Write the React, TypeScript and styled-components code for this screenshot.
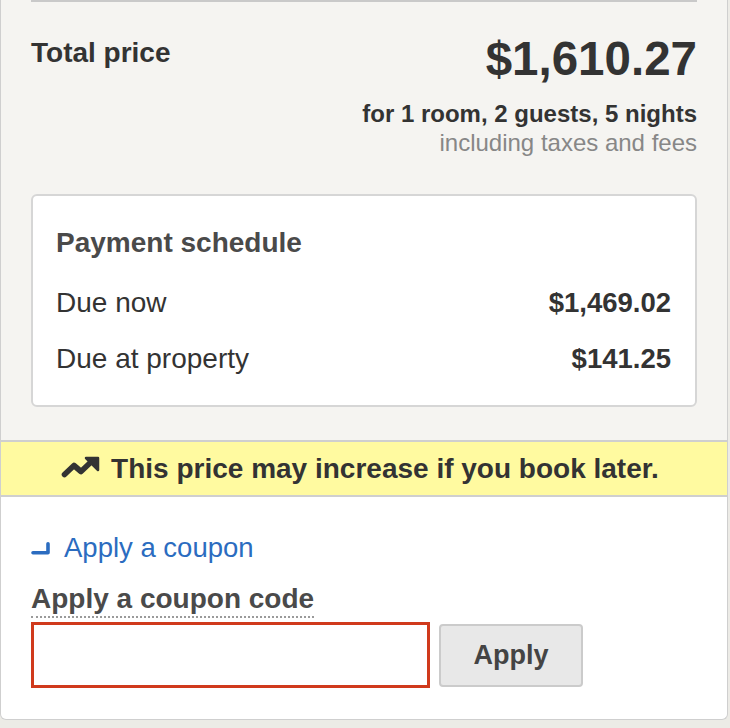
import React from 'react';
import styled, {createGlobalStyle} from 'styled-components';

const GlobalStyle = createGlobalStyle`
  html, body {
    margin: 0;
    background: #ecebe6;
  }
  body {
    font-family: 'Liberation Sans', Arial, Helvetica, sans-serif;
    color: #333;
  }
`

const Card = styled.div`
  width: 728px;
  box-sizing: border-box;
  border: 1px solid #cfcfcf;
  border-top: none;
  border-radius: 0 0 6px 6px;
  background: #fff;
  overflow: hidden;
`

const PriceSection = styled.section`
  background: #f5f4f1;
  padding: 0 30px 33px;
`

const Divider = styled.hr`
  margin: 0;
  border: none;
  height: 2px;
  background: #c9c9c9;
`

const TotalRow = styled.div`
  display: flex;
  justify-content: space-between;
  align-items: flex-start;
  margin-top: 30px;
`

const TotalLabel = styled.h2`
  margin: 4px 0 0;
  font-size: 28px;
  line-height: 34px;
  font-weight: 700;
  color: #333;
`

const PriceBlock = styled.div`
  text-align: right;
`

const BigPrice = styled.div`
  font-size: 47.5px;
  line-height: 54px;
  font-weight: 700;
  color: #333;
  margin-bottom: 13px;
`

const StayLine = styled.div<{$muted?: boolean}>`
  font-size: 24px;
  line-height: 29px;
  font-weight: ${p => p.$muted ? 400 : 700};
  color: ${p => p.$muted ? '#878787' : '#333'};
`

const ScheduleBox = styled.div`
  margin-top: 37px;
  background: #fff;
  border: 2px solid #d6d6d6;
  border-radius: 6px;
  padding: 30px 24px 29px 23px;
`

const ScheduleTitle = styled.h3`
  margin: 0 0 26px;
  font-size: 28px;
  line-height: 34px;
  font-weight: 700;
  color: #4a4a4a;
`

const ScheduleRows = styled.div`
  display: flex;
  flex-direction: column;
  gap: 22px;
`

const ScheduleRow = styled.div`
  display: flex;
  justify-content: space-between;
  font-size: 28px;
  line-height: 34px;
`

const Amount = styled.span`
  font-weight: 700;
  font-size: 27.5px;
`

const Banner = styled.div`
  display: flex;
  align-items: center;
  justify-content: center;
  gap: 10px;
  height: 53px;
  padding-right: 8px;
  background: #fffaa0;
  border-top: 2px solid #cfcfcf;
  border-bottom: 2px solid #cfcfcf;
  font-size: 28px;
  font-weight: 700;
  color: #333;
`

const TrendIcon = styled.svg`
  width: 40px;
  height: 22px;
  margin-top: -4px;
  flex: none;
`

const CouponSection = styled.section`
  padding: 34px 30px 31px;
`

const CouponToggle = styled.a`
  display: flex;
  align-items: center;
  gap: 14px;
  color: #2b6cc0;
  font-size: 27.5px;
  line-height: 34px;
  text-decoration: none;
  cursor: pointer;
`

const CodeLabel = styled.label`
  display: inline-block;
  margin-top: 17px;
  font-size: 28px;
  line-height: 34px;
  font-weight: 700;
  color: #4a4a4a;
  border-bottom: 2px dotted #9a9a9a;
`

const InputRow = styled.div`
  display: flex;
  align-items: center;
  gap: 9px;
  margin-top: 4px;
`

const CodeInput = styled.input`
  width: 399px;
  height: 66px;
  box-sizing: border-box;
  border: 3px solid #d03a1c;
  border-radius: 0;
  font-size: 24px;
  padding: 0 12px;
  outline: none;
`

const ApplyButton = styled.button`
  width: 144px;
  height: 63px;
  background: #e8e8e8;
  border: 2px solid #cbcbcb;
  border-radius: 4px;
  font-family: 'Liberation Sans', Arial, sans-serif;
  font-size: 27px;
  font-weight: 700;
  color: #444;
  cursor: pointer;
`

const TrendUp = () => (
    <TrendIcon viewBox="0 0 40 22" fill="none">
        <polyline points="3.5,18.5 13,9.5 20,15.5 30,6" stroke="#333" strokeWidth="5.6" strokeLinecap="round" strokeLinejoin="round"/>
        <polygon points="25,2 37,2 37,14" fill="#333" stroke="#333" strokeWidth="2.5" strokeLinejoin="round"/>
    </TrendIcon>
)

const CornerIcon = () => (
    <svg width="19" height="13" viewBox="0 0 19 13" fill="none">
        <path d="M17 1.8 V10.8 H2" stroke="currentColor" strokeWidth="3.6" strokeLinecap="round" strokeLinejoin="round"/>
    </svg>
)

const schedule = [
    {label: 'Due now', amount: '$1,469.02'},
    {label: 'Due at property', amount: '$141.25'},
]

const App = () => {
    return (
        <>
            <GlobalStyle/>
            <Card>
                <PriceSection>
                    <Divider/>
                    <TotalRow>
                        <TotalLabel>Total price</TotalLabel>
                        <PriceBlock>
                            <BigPrice>$1,610.27</BigPrice>
                            <StayLine>for 1 room, 2 guests, 5 nights</StayLine>
                            <StayLine $muted>including taxes and fees</StayLine>
                        </PriceBlock>
                    </TotalRow>
                    <ScheduleBox>
                        <ScheduleTitle>Payment schedule</ScheduleTitle>
                        <ScheduleRows>
                            {schedule.map(row => (
                                <ScheduleRow key={row.label}>
                                    <span>{row.label}</span>
                                    <Amount>{row.amount}</Amount>
                                </ScheduleRow>
                            ))}
                        </ScheduleRows>
                    </ScheduleBox>
                </PriceSection>
                <Banner>
                    <TrendUp/>
                    This price may increase if you book later.
                </Banner>
                <CouponSection>
                    <CouponToggle>
                        <CornerIcon/>
                        Apply a coupon
                    </CouponToggle>
                    <CodeLabel htmlFor="coupon">Apply a coupon code</CodeLabel>
                    <InputRow>
                        <CodeInput id="coupon" type="text"/>
                        <ApplyButton>Apply</ApplyButton>
                    </InputRow>
                </CouponSection>
            </Card>
        </>
    );
}

export default App;
